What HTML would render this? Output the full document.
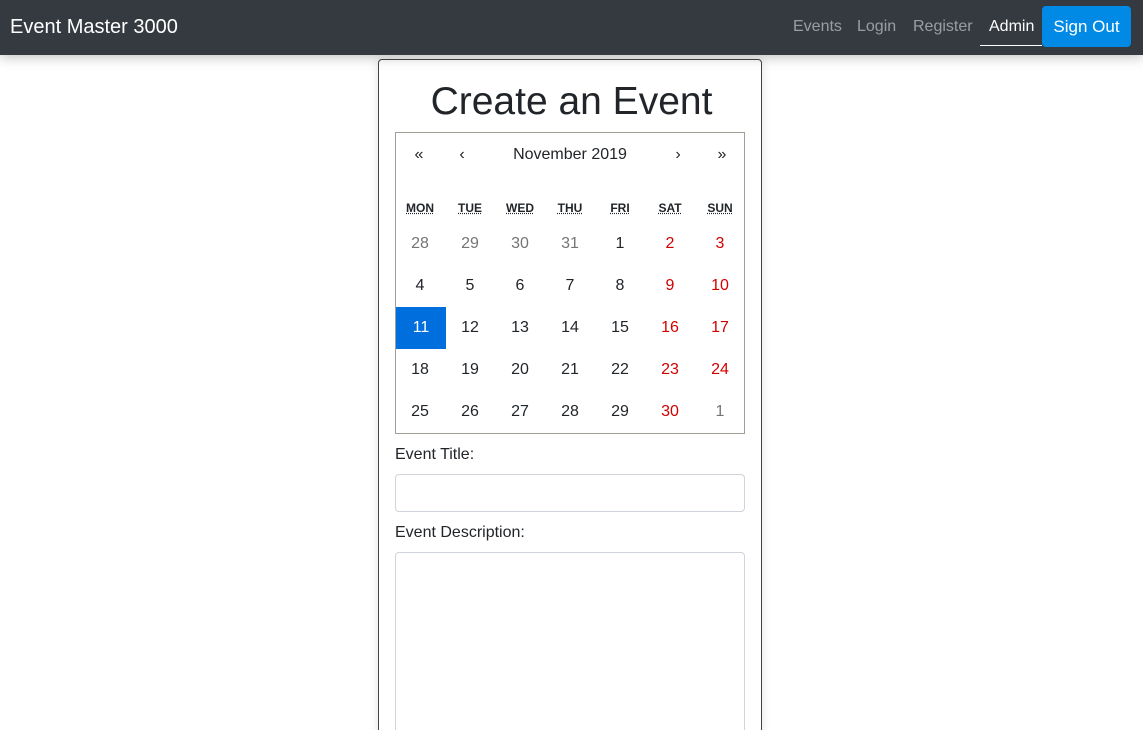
<!DOCTYPE html>
<html><head><style>
*{box-sizing:border-box;margin:0;padding:0}
html,body{width:1143px;height:730px;overflow:hidden}
body{background:#fff;font-family:"Liberation Sans",sans-serif;color:#212529;position:relative}
nav{position:absolute;left:0;top:0;width:1143px;height:55px;background:#343a40;box-shadow:0 2px 12px rgba(0,0,0,.25);z-index:2}
.brand{position:absolute;left:10px;top:16px;font-size:20px;color:#fff}
.nl{position:absolute;top:18px;font-size:16px;color:rgba(255,255,255,.5)}
.btn{position:absolute;left:1042px;top:6px;width:89px;height:41px;background:#008ae6;border-radius:4px;color:#fff;font-size:17px;text-align:center;line-height:42px}
.card{position:absolute;left:378px;top:59px;width:384px;height:700px;border:1px solid #444;border-radius:4px;box-shadow:0 0 10px rgba(0,0,0,.12)}
h1{position:absolute;left:0;width:100%;top:80px;text-align:center;font-size:39px;font-weight:400;color:#212529}
.cal{position:absolute;left:395px;top:132px;width:350px;height:302px;border:1px solid #a0a096}
.c{position:absolute;width:50px;text-align:center;font-size:16px}
.nav{font-size:16px;top:13px}
.wd{font-size:12px;font-weight:bold;top:68px}
.wd span{text-decoration:underline dotted}
.g{color:#757575}.r{color:#d10000}
.sel{background:#006edc;color:#fff;height:42px;line-height:42px}
label{position:absolute;left:395px;font-size:16px}
.in{position:absolute;left:395px;width:350px;border:1px solid #ced4da;border-radius:4px}
</style></head><body>
<nav>
<div class="brand">Event Master 3000</div>
<div class="nl" style="left:793px">Events</div>
<div class="nl" style="left:857px">Login</div>
<div class="nl" style="left:913px">Register</div>
<div class="nl" style="left:989px;color:#fff">Admin</div>
<div style="position:absolute;left:980px;top:45px;width:62px;height:1px;background:#fff"></div>
<div class="btn">Sign Out</div>
</nav>
<div class="card"></div>
<h1>Create an Event</h1>
<div class="cal">
<div class="c nav" style="left:-2px">«</div>
<div class="c nav" style="left:41px">‹</div>
<div class="nav" style="position:absolute;left:0;width:100%;text-align:center">November 2019</div>
<div class="c nav" style="left:257px">›</div>
<div class="c nav" style="left:301px">»</div>
<div class="c wd" style="left:-1px"><span>MON</span></div>
<div class="c wd" style="left:49px"><span>TUE</span></div>
<div class="c wd" style="left:99px"><span>WED</span></div>
<div class="c wd" style="left:149px"><span>THU</span></div>
<div class="c wd" style="left:199px"><span>FRI</span></div>
<div class="c wd" style="left:249px"><span>SAT</span></div>
<div class="c wd" style="left:299px"><span>SUN</span></div>
<div id="days"></div>
</div>
<label style="top:446px">Event Title:</label>
<div class="in" style="top:474px;height:38px"></div>
<label style="top:524px">Event Description:</label>
<div class="in" style="top:552px;height:200px"></div>
<script>
var d=[[28,29,30,31,1,2,3],[4,5,6,7,8,9,10],[11,12,13,14,15,16,17],[18,19,20,21,22,23,24],[25,26,27,28,29,30,1]],h='';
d.forEach(function(r,i){r.forEach(function(v,j){var cl='c';if((i==0&&j<4)||(i==4&&j==6))cl+=' g';else if(j>=5)cl+=' r';
if(i==2&&j==0){cl+=' sel';h+='<div class="'+cl+'" style="left:0;top:174px">'+v+'</div>';return;}
h+='<div class="'+cl+'" style="left:'+(j*50-1)+'px;top:'+(102+i*42)+'px">'+v+'</div>';});});
document.getElementById('days').innerHTML=h;
</script>
</body></html>
